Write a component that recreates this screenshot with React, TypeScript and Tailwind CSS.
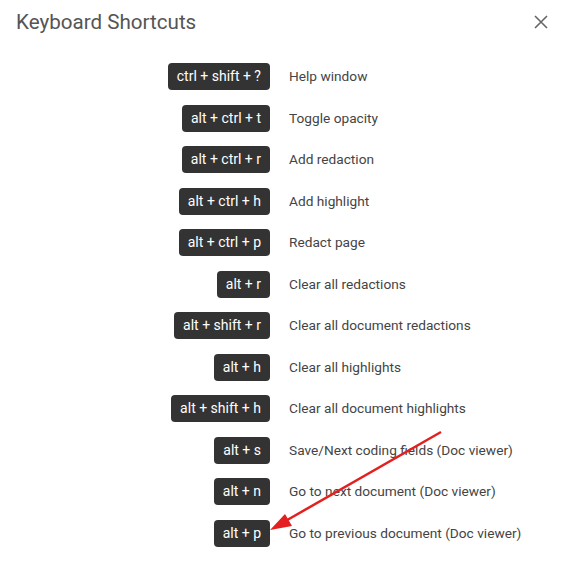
import React from "react";

const rows: [string, string][] = [
  ["ctrl + shift + ?", "Help window"],
  ["alt + ctrl + t", "Toggle opacity"],
  ["alt + ctrl + r", "Add redaction"],
  ["alt + ctrl + h", "Add highlight"],
  ["alt + ctrl + p", "Redact page"],
  ["alt + r", "Clear all redactions"],
  ["alt + shift + r", "Clear all document redactions"],
  ["alt + h", "Clear all highlights"],
  ["alt + shift + h", "Clear all document highlights"],
  ["alt + s", "Save/Next coding fields (Doc viewer)"],
  ["alt + n", "Go to next document (Doc viewer)"],
  ["alt + p", "Go to previous document (Doc viewer)"],
];

export default function App() {
  return (
    <div
      className="relative w-[572px] h-[564px] bg-white overflow-hidden"
      style={{ fontFamily: "Roboto, 'Liberation Sans', sans-serif" }}
    >
      <div className="flex items-center justify-between pl-4 pr-[24px] pt-[6px] h-[38px]">
        <h1 className="text-[20.6px] leading-none text-[#555555] font-normal">Keyboard Shortcuts</h1>
        <svg width="14" height="14" viewBox="0 0 14 14" className="text-[#666666]">
          <path d="M1 1L13 13M13 1L1 13" stroke="currentColor" strokeWidth="1.6" />
        </svg>
      </div>
      <div className="grid grid-cols-[270px_1fr] gap-x-[19px] gap-y-[14.5px] mt-[25px]">
        {rows.map(([k, d]) => (
          <React.Fragment key={k}>
            <div className="justify-self-end h-[27px] px-[9px] flex items-center rounded-[4px] bg-[#333333] text-white text-[14px]">
              {k}
            </div>
            <div className="h-[27px] flex items-center text-[13.7px] text-[#444444]">{d}</div>
          </React.Fragment>
        ))}
      </div>
      <svg className="absolute left-0 top-0 pointer-events-none" width="572" height="564">
        <line x1="441" y1="432" x2="282" y2="523" stroke="#e3201f" strokeWidth="2.5" />
        <polygon points="270,530 285,514 292,526" fill="#e3201f" />
      </svg>
    </div>
  );
}
